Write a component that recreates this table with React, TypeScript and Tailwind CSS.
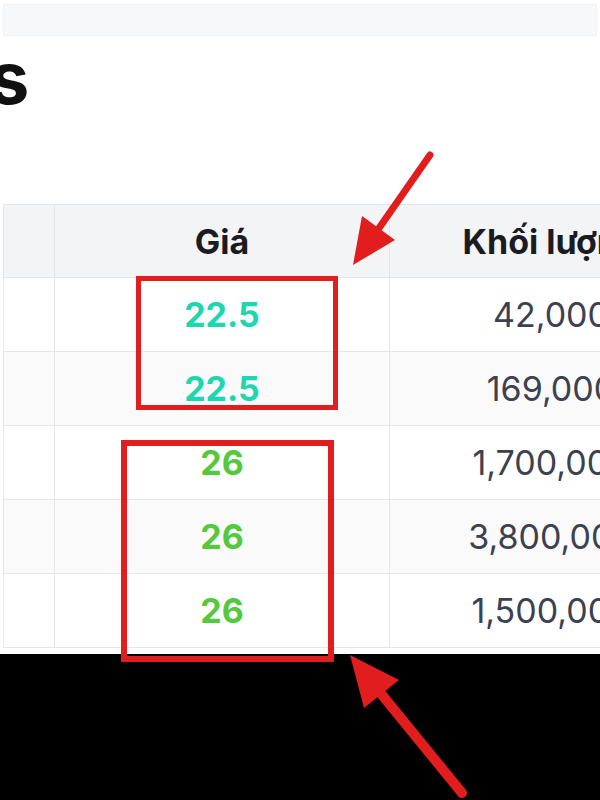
import React from "react";

type Row = {
  price: string;
  volume: string;
  tone: "teal" | "green";
};

const rows: Row[] = [
  { price: "22.5", volume: "42,000", tone: "teal" },
  { price: "22.5", volume: "169,000", tone: "teal" },
  { price: "26", volume: "1,700,000", tone: "green" },
  { price: "26", volume: "3,800,000", tone: "green" },
  { price: "26", volume: "1,500,000", tone: "green" },
];

function Arrows() {
  return (
    <svg
      className="absolute left-0 top-0 pointer-events-none"
      width="600"
      height="800"
      viewBox="0 0 600 800"
    >
      <line x1="430" y1="155" x2="377" y2="231" stroke="#e11d1d" strokeWidth="7" strokeLinecap="round" />
      <polygon points="353,265 395,240 362,216" fill="#e11d1d" />
      <line x1="462" y1="793" x2="378" y2="690" stroke="#e11d1d" strokeWidth="10" strokeLinecap="round" />
      <polygon points="350,655 399,680 364,708" fill="#e11d1d" />
    </svg>
  );
}

export default function App() {
  return (
    <main
      className="relative w-[600px] h-[800px] overflow-hidden bg-white"
      style={{ fontFamily: "Inter, 'Noto Sans', sans-serif" }}
    >
      <div className="px-[3px] pt-[4px]">
        <div className="h-[32px] bg-[#f7f8fa] border border-[#eff1f4]" />
      </div>

      <h1 className="mt-[6px] h-[72px] ml-[-11px] text-[72px] leading-none font-bold text-[#111]">
        s
      </h1>

      <div className="mt-[90px] ml-[3px] w-[720px]">
        <div className="flex h-[74px] bg-[#f3f4f6] border-t border-b border-[#e3e5e9]">
          <div className="w-[52px] border-l border-r border-[#e3e5e9]" />
          <div className="w-[335px] flex items-center justify-center border-r border-[#e3e5e9] text-[34px] font-bold text-[#1a1c22]">
            Giá
          </div>
          <div className="w-[322px] flex items-center justify-center text-[34px] font-bold text-[#1a1c22] whitespace-nowrap">
            Khối lượng
          </div>
        </div>

        {rows.map((r, i) => (
          <div
            key={i}
            className={`flex h-[74px] border-b border-[#e5e7eb] ${i % 2 === 1 ? "bg-[#fafafa]" : "bg-white"}`}
          >
            <div className="w-[52px] border-l border-r border-[#e5e7eb]" />
            <div
              className={`w-[335px] flex items-center justify-center border-r border-[#e5e7eb] text-[34px] font-bold ${
                r.tone === "teal" ? "text-[#1fd6b2]" : "text-[#55c93e]"
              }`}
            >
              {r.price}
            </div>
            <div className="w-[322px] flex items-center justify-center text-[34px] text-[#3b4150] whitespace-nowrap">
              {r.volume}
            </div>
          </div>
        ))}
      </div>

      <div className="mt-[6px] h-[200px] bg-black" />

      <div className="absolute left-[136px] top-[276px] w-[202px] h-[134px] border-[5px] border-[#e11d1d]" />
      <div className="absolute left-[121px] top-[440px] w-[213px] h-[222px] border-[6px] border-[#e11d1d]" />

      <Arrows />
    </main>
  );
}
